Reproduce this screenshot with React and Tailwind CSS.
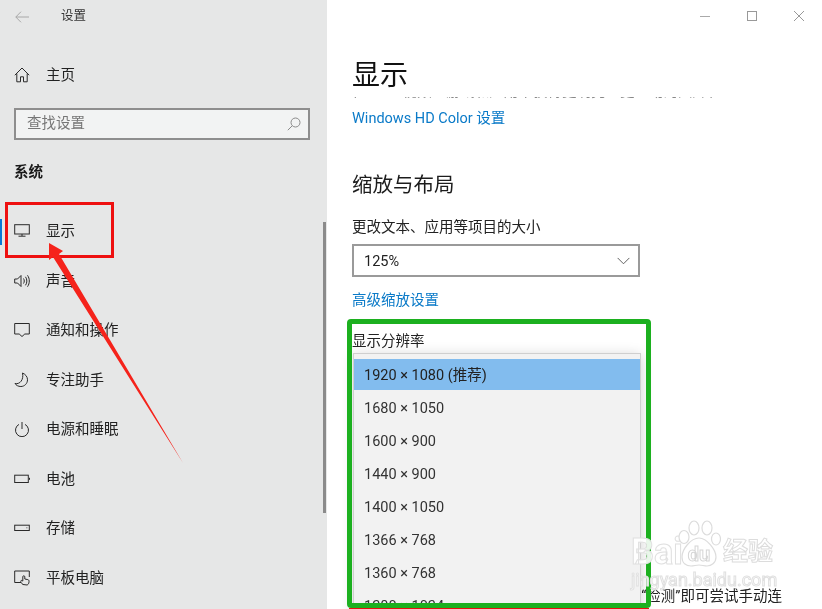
const items = [
  ["显示", "display"],
  ["声音", "sound"],
  ["通知和操作", "chat"],
  ["专注助手", "moon"],
  ["电源和睡眠", "power"],
  ["电池", "battery"],
  ["存储", "storage"],
  ["平板电脑", "tablet"],
];

const resolutions = ["1680 × 1050", "1600 × 900", "1440 × 900", "1400 × 1050", "1366 × 768", "1360 × 768", "1280 × 1024"];

function Icon({ name }) {
  const shapes = {
    home: <path d="M.8 8.200 8 1l7.200 7.200M2.800 6.500v8.300h3.700v-5h3v5h3.700V6.500" />,
    display: (
      <>
        <rect x="0.700" y="1.700" width="14.600" height="9.300" />
        <path d="M8 11v2M4.500 13.200h7" />
      </>
    ),
    sound: (
      <>
        <path d="M.7 6h2.800L7 2.500v11L3.500 10H.7z" />
        <path d="M9.500 5.500c1 1.500 1 3.500 0 5M11.500 3.800c1.800 2.500 1.800 6 0 8.500M13.500 2.300c2.400 3.400 2.400 8 0 11.400" />
      </>
    ),
    chat: <path d="M.7 1.500h14.600v10.500h-4.500l-2.800 2.500-2.800-2.500H.7z" />,
    moon: <path d="M8.500 1c3 1.300 5 3.700 5 6.800 0 3.700-3 6.700-6.600 6.700-2.700 0-4.800-1.200-5.900-3 4.800 1.200 9-3.800 7.500-10.500z" />,
    power: (
      <>
        <path d="M8 1v7" />
        <path d="M5 3.400a6.500 6.500 0 1 0 6 0" />
      </>
    ),
    battery: (
      <>
        <rect x="0.700" y="4.200" width="13.600" height="7.300" />
        <path d="M15.500 6.800v2" />
      </>
    ),
    storage: (
      <>
        <rect x="0.700" y="5.200" width="14.600" height="5.300" />
        <path d="M12.500 7.800h.8" />
      </>
    ),
    tablet: (
      <>
        <path d="M7 12.500H.7V1h14.600v6" />
        <path d="M9 14.500c-1.500-1-2.200-2-2.200-3.200 0-1.300 1.200-1 2-.2V6.800c0-1.400 2-1.400 2 0V9l3 .6c1.200.3 1.300 1.200 1.200 2.200-.1 1.600-.8 2.700-1.800 3.200z" />
      </>
    ),
  };
  return (
    <svg viewBox="0 0 16 16" className="w-4 h-4 shrink-0" fill="none" stroke="#2a2a2a" strokeWidth="1">
      {shapes[name]}
    </svg>
  );
}

function NavRow({ label, icon, active }) {
  return (
    <div className="relative flex items-center h-[49.5px] pl-[14px] gap-4 text-[14.5px] text-[#222]">
      {active && <div className="absolute left-0 top-[12px] w-[2px] h-[26px] bg-[#0a78d4]" />}
      <Icon name={icon} />
      <span className="pt-[2px]">{label}</span>
    </div>
  );
}

export default function App() {
  return (
    <div
      className="relative flex w-[822px] h-[609px] overflow-hidden bg-white blur-[0.3px]"
      style={{ fontFamily: 'Roboto, "Noto Sans CJK SC", sans-serif' }}
    >
      <aside className="relative w-[327px] h-full shrink-0 bg-[#e6e7e7] flex flex-col">
        <div className="flex items-center h-[33px] pl-[15px]">
          <svg viewBox="0 0 14 12" className="w-[14px] h-3" fill="none" stroke="#a8a8a8" strokeWidth="1">
            <path d="M6 .7.8 6 6 11.300M.8 6H14" />
          </svg>
          <span className="ml-[32px] text-[12.5px] text-[#333]">设置</span>
        </div>
        <div className="mt-[17px]">
          <NavRow label="主页" icon="home" />
        </div>
        <div className="mt-2 mx-[14px] w-[296px] h-8 flex items-center justify-between border-[2px] border-[#8e8e8e] bg-[#f2f3f3] pl-[11px] pr-[7px]">
          <span className="pt-px text-[14.5px] text-[#767676]">查找设置</span>
          <svg viewBox="0 0 14 14" className="w-[14px] h-[14px]" fill="none" stroke="#8a8a8a" strokeWidth="1">
            <circle cx="8.500" cy="5.500" r="4.500" />
            <path d="M5.200 8.800.8 13.200" />
          </svg>
        </div>
        <div className="mt-[17px] h-[30px] flex items-center pl-[14px] pt-[2px] text-[14.5px] font-bold text-[#1a1a1a]">系统</div>
        <div className="mt-5 flex flex-col">
          {items.map(([label, icon], i) => (
            <NavRow key={label} label={label} icon={icon} active={i === 0} />
          ))}
        </div>
        <div className="absolute left-[323px] top-[222px] w-[2.500px] h-[291px] bg-[#8b8b8b]" />
      </aside>

      <main className="relative flex-1 min-w-0 pl-[25px] flex flex-col">
        <div className="flex items-center justify-end h-8 pr-[18px] gap-[37px]">
          <div className="w-[10px] h-px bg-[#aaa]" />
          <div className="w-[10px] h-[10px] border border-[#999]" />
          <svg viewBox="0 0 10 10" className="w-[10px] h-[10px]" fill="none" stroke="#999" strokeWidth="1">
            <path d="M0 0l10 10M10 0 0 10" />
          </svg>
        </div>
        <h1 className="mt-5 h-11 flex items-center pt-[3px] text-[28px] leading-none text-[#111]">显示</h1>
        <div className="h-[2px] mt-px w-[360px] overflow-hidden">
          <div className="-mt-[15px] text-[14.5px] leading-[20px] whitespace-nowrap text-[#888]">
            在 HDR 视频、游戏和应用中获得更明亮、更生动的图片和更好的显示效果。
          </div>
        </div>
        <a className="mt-2 h-[22px] flex items-center pt-[2px] text-[14.5px] text-[#0a7ac8]">Windows HD Color 设置</a>
        <h2 className="mt-10 h-[30px] flex items-center pt-[2px] text-[20.5px] text-[#1c1c1c]">缩放与布局</h2>
        <div className="mt-[17px] h-[22px] flex items-center pt-[2px] text-[14.5px] text-[#222]">更改文本、应用等项目的大小</div>
        <div className="mt-[6px] w-[288px] h-[33px] flex items-center justify-between border-[2px] border-[#9a9a9a] pl-[10px] pr-[8px] text-[14.5px] text-[#222]">
          <span className="pt-[2px]">125%</span>
          <svg viewBox="0 0 14 8" className="w-[13px] h-2" fill="none" stroke="#555" strokeWidth="1">
            <path d="M.7.7 7 7 13.300.7" />
          </svg>
        </div>
        <a className="mt-3 h-[22px] flex items-center pt-[2px] text-[14.5px] text-[#0a7ac8]">高级缩放设置</a>
        <div className="mt-[19px] h-[22px] flex items-center pt-[2px] text-[14.5px] text-[#222]">显示分辨率</div>
        <div className="mt-[233px] w-[430px] h-[22px] flex items-center justify-end pt-[2px] overflow-hidden whitespace-nowrap text-[14.5px] text-[#222]">
          较旧的显示器可能不会始终自动连接。选择“检测”即可尝试手动连
        </div>

        <div className="absolute left-[26px] top-[353px] w-[288px] h-[270px] border border-[#cfcfcf] bg-[#f2f2f2] pt-[4px] shadow-[0_2px_12px_rgba(0,0,0,0.18)]">
          <div className="h-[33px] flex items-center pl-[10px] pt-[2px] bg-[#82bcee] border-y border-[#f2f2f2] text-[14.5px] text-[#222]">
            1920 × 1080 (推荐)
          </div>
          {resolutions.map((r) => (
            <div key={r} className="h-[33px] flex items-center pl-[10px] pt-[2px] text-[14.5px] text-[#333]">
              {r}
            </div>
          ))}
        </div>
      </main>

      {/* annotations */}
      <div className="absolute left-[5px] top-[202px] w-[109px] h-[56px] border-[3px] border-[#ee1111]" />
      <svg className="absolute left-0 top-0 w-[822px] h-[609px] pointer-events-none" viewBox="0 0 822 609">
        <polygon points="49,243 63,251 59,254 183,463 53,257 49,260" fill="#f5231b" />
      </svg>
      <div className="absolute left-[349px] top-[608px] w-[300px] h-px bg-[#e81010]" />
      <div className="absolute left-[347px] top-[319px] w-[304px] h-[289px] border-[5px] border-[#1cb01f] rounded-[4px]" />

      {/* watermark */}
      <div className="absolute left-[631px] top-[520px] w-[150px] h-[70px] text-white/90">
        <span className="absolute left-0 top-[12px] text-[36px] leading-[40px] font-bold [-webkit-text-stroke:1px_#e0e0e0]">Bai</span>
        <svg viewBox="0 0 44 48" className="absolute left-[46px] top-[0px] w-[44px] h-[48px]" fill="#fff" stroke="#dcdcdc" strokeWidth="1.200">
          <ellipse cx="7" cy="17" rx="5" ry="6.500" />
          <ellipse cx="17" cy="8" rx="5" ry="7" />
          <ellipse cx="30" cy="8" rx="5" ry="7" />
          <ellipse cx="39" cy="19" rx="4.500" ry="6" />
          <path d="M22 18c8 0 17 12 17 19 0 6-5 9-9 9-3 0-5-1-8-1s-5 1-8 1c-5 0-9-3-9-9 0-8 9-19 17-19z" />
        </svg>
        <span className="absolute left-[50px] top-[22px] w-[36px] text-center text-[20px] leading-[24px] font-bold [-webkit-text-stroke:1px_#d6d6d6]">du</span>
        <span className="absolute left-[92px] top-[17px] text-[25px] leading-[30px] font-bold [-webkit-text-stroke:1px_#dcdcdc]">经验</span>
        <span className="absolute left-0 top-[49px] text-[18px] leading-[22px] whitespace-nowrap [-webkit-text-stroke:1px_#e0e0e0]">jingyan.baidu.com</span>
      </div>
    </div>
  );
}
